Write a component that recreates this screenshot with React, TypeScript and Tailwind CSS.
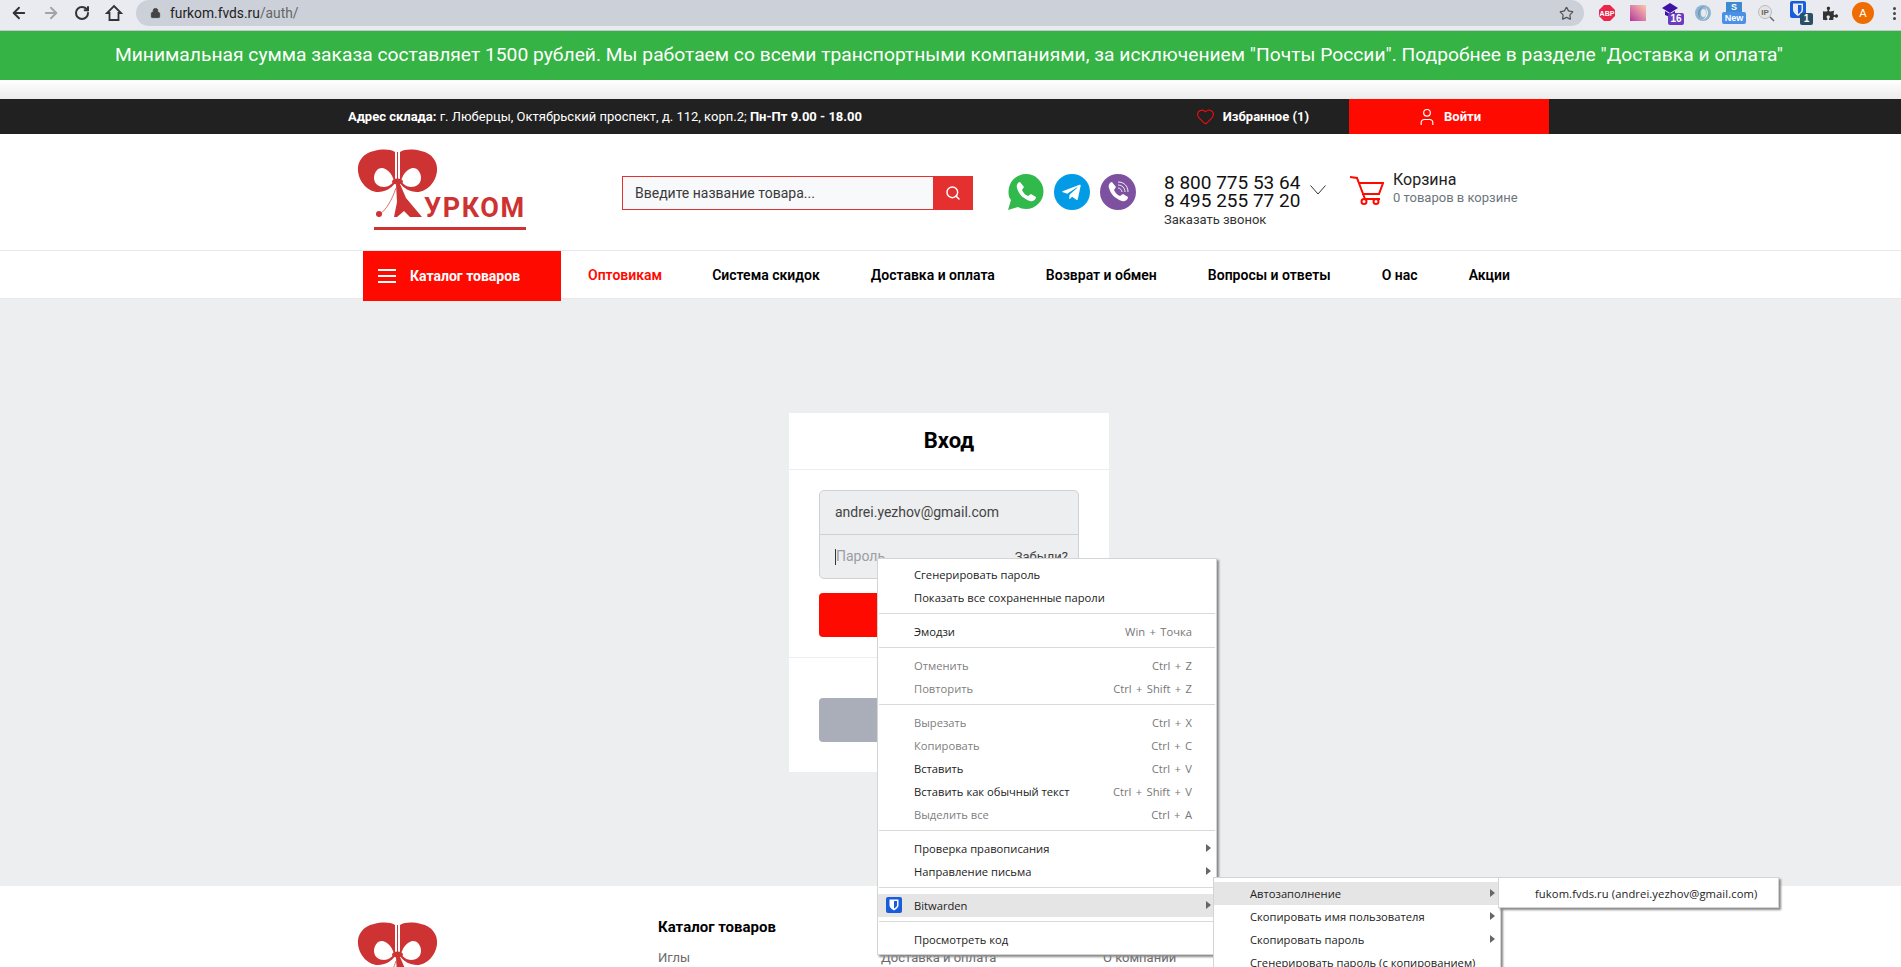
import { FaTelegramPlane, FaPuzzlePiece } from "react-icons/fa";
import { ArrowLeft, ArrowRight, RotateCw, Lock, Star, Search, Heart, User } from "lucide-react";

const navLinks = [
  { label: "Оптовикам", red: true, className: "ml-[27px]" },
  { label: "Система скидок", className: "ml-[50px]" },
  { label: "Доставка и оплата", className: "ml-[51px]" },
  { label: "Возврат и обмен", className: "ml-[51px]" },
  { label: "Вопросы и ответы", className: "ml-[51px]" },
  { label: "О нас", className: "ml-[51px]" },
  { label: "Акции", className: "ml-[51px]" },
];

const Bow = () => (
  <>
    <path d="M45 12C40 9 32 9 24 11C13 13 7 22 8 31C9 42 18 52 28 52C35 52 42 48 45 43Z" fill="#cd3333" />
    <path d="M50 12C55 9 63 9 71 11C82 13 88 22 87 31C86 42 77 52 67 52C60 52 53 48 50 43Z" fill="#cd3333" />
    <path d="M44 41C42 33 36 28 32 28C27 28 24 33 24 38C24 44 29 47 34 47C38 47 42 44 44 41Z" fill="#fff" />
    <path d="M51 41C53 33 59 28 63 28C68 28 71 33 71 38C71 44 66 47 61 47C57 47 53 44 51 41Z" fill="#fff" />
    <path d="M47.5 12V42" stroke="#cd3333" strokeWidth="1" />
    <ellipse cx="47.5" cy="41.5" rx="5.5" ry="3" fill="#cd3333" />
  </>
);

const Logo = () => (
  <svg width="190" height="100" viewBox="0 0 190 100" className="shrink-0">
    <Bow />
    <path d="M46 44H50L56 58L72 77H60L54 71L47 77H44L47 62Z" fill="#cd3333" />
    <path d="M46 48C42 60 36 70 30 74" stroke="#cd3333" strokeWidth="0.7" fill="none" />
    <circle cx="29" cy="74" r="3" fill="#cd3333" />
    <text x="74" y="77" fontFamily="Roboto" fontWeight="700" fontSize="27" letterSpacing="1.6" fill="#cd3333">
      УРКОМ
    </text>
    <rect x="24" y="87" width="152" height="3" fill="#cd3333" />
  </svg>
);

const ExtensionIcons = () => (
  <div className="flex items-center h-full">
    <svg width="16" height="16" viewBox="0 0 16 16" className="ml-[15px]">
      <path d="M5 0H11L16 5V11L11 16H5L0 11V5Z" fill="#e8274b" />
      <text x="8" y="10.5" textAnchor="middle" fontFamily="Liberation Sans" fontWeight="700" fontSize="7" fill="#fff">ABP</text>
    </svg>
    <div className="ml-[15px] w-[16px] h-[16px] bg-gradient-to-tr from-[#b5309a] to-[#fdc8a8]" />
    <div className="ml-[16px] relative w-[22px] h-[24px]">
      <svg width="16" height="14" viewBox="0 0 16 14" className="absolute top-[2px] left-0">
        <path d="M8 0L16 5L8 10L0 5Z M3 8L8 11L13 8V12L8 14L3 12Z" fill="#3f12a5" />
      </svg>
      <span className="absolute right-0 bottom-0 w-[16px] h-[12px] rounded-[2px] bg-[#6a3bc0] text-white text-[10px] leading-[12px] font-bold text-center font-['Liberation_Sans']">16</span>
    </div>
    <svg width="16" height="16" viewBox="0 0 16 16" className="ml-[11px]">
      <circle cx="8" cy="8" r="8" fill="#8fb4cf" />
      <path d="M10 1C4 3 3 10 6 14C1 10 3 2 10 1Z" fill="#5f8fb5" />
      <path d="M7 15C12 13 13 6 10 2C15 6 13 14 7 15Z" fill="#fff" />
      <ellipse cx="8.5" cy="8" rx="2.5" ry="4" fill="#e8eaed" />
    </svg>
    <div className="ml-[11px] w-[24px] flex flex-col items-center">
      <span className="w-[16px] h-[10px] bg-[#3e89d0] text-white text-[9px] leading-[10px] font-bold text-center font-['Liberation_Sans']">S</span>
      <span className="w-[24px] h-[12px] rounded-[2px] bg-[#4a8fe8] text-white text-[9px] leading-[12px] font-bold text-center font-['Liberation_Sans']">New</span>
    </div>
    <svg width="17" height="17" viewBox="0 0 17 17" className="ml-[12px]">
      <circle cx="7" cy="7" r="6.5" fill="#e4e4e4" stroke="#bbb" />
      <text x="7" y="10" textAnchor="middle" fontFamily="Liberation Sans" fontWeight="700" fontSize="8" fill="#666">IP</text>
      <path d="M12 12L16 16" stroke="#666" strokeWidth="1.5" />
    </svg>
    <div className="ml-[15px] relative w-[23px] h-[24px]">
      <svg width="16" height="18" viewBox="0 0 16 18" className="absolute left-0 top-0">
        <rect width="16" height="17" rx="2" fill="#175ddc" />
        <path d="M3 2.5H13V9C13 12 8 15 8 15C8 15 3 12 3 9Z" fill="#e9ebf0" />
        <path d="M8 4H11.5V9C11.5 11 8 13 8 13Z" fill="#175ddc" />
      </svg>
      <span className="absolute right-0 bottom-0 w-[13px] h-[12px] rounded-[2px] bg-[#2b4f66] text-white text-[10px] leading-[12px] font-bold text-center font-['Liberation_Sans']">1</span>
    </div>
    <FaPuzzlePiece className="ml-[10px] w-[15px] h-[15px] text-[#333]" />
    <div className="ml-[14px] w-[22px] h-[22px] rounded-full bg-[#ef6c00] text-white text-[11px] flex items-center justify-center font-['Liberation_Sans']">A</div>
    <div className="ml-[19px] flex flex-col gap-[2px]">
      <span className="w-[3px] h-[3px] rounded-full bg-[#444]" />
      <span className="w-[3px] h-[3px] rounded-full bg-[#444]" />
      <span className="w-[3px] h-[3px] rounded-full bg-[#444]" />
    </div>
  </div>
);

const BrowserBar = () => (
  <div className="h-[31px] bg-[#e9ebf0] border-b border-[#c4c6cb] flex items-start text-[#3c4043]">
    <ArrowLeft className="ml-[10px] mt-[4px] w-[18px] h-[18px] text-[#333]" strokeWidth={2.5} />
    <ArrowRight className="ml-[14px] mt-[4px] w-[18px] h-[18px] text-[#a0a3a8]" strokeWidth={2.5} />
    <RotateCw className="ml-[14px] mt-[5px] w-[16px] h-[16px] text-[#333]" strokeWidth={3} />
    <svg width="18" height="18" viewBox="0 0 18 18" className="ml-[15px] mt-[4px]" fill="none" stroke="#333" strokeWidth="1.8">
      <path d="M9 2L16 9H13.5V16H4.5V9H2Z" strokeLinejoin="miter" />
    </svg>
    <div className="ml-[13px] w-[1448px] h-[26px] rounded-[14px] bg-[#ccd0d9] flex items-center font-['Roboto',sans-serif] text-[13.8px]">
      <Lock className="ml-[14px] w-[11px] h-[12px] text-[#444] fill-[#444]" />
      <span className="ml-[9px] text-[#222]">furkom.fvds.ru</span>
      <span className="text-[#666]">/auth/</span>
      <Star className="ml-auto mr-[10px] w-[15px] h-[15px] text-[#555]" strokeWidth={2} />
    </div>
    <div className="h-[26px]">
      <ExtensionIcons />
    </div>
  </div>
);

const TopBar = () => (
  <div className="h-[35px] bg-[#212121] flex items-center text-white text-[13px]">
    <div className="ml-[348px]">
      <b className="font-bold">Адрес склада:</b> г. Люберцы, Октябрьский проспект, д. 112, корп.2; <b className="font-bold">Пн-Пт 9.00 - 18.00</b>
    </div>
    <Heart className="ml-auto w-[19px] h-[19px] text-[#ff0a0a]" strokeWidth={1.3} />
    <span className="ml-[8px] font-bold">Избранное (1)</span>
    <button className="ml-[40px] mr-[352px] w-[200px] h-full bg-[#ff0a00] flex items-center justify-center gap-[7px] font-bold">
      <User className="w-[20px] h-[20px]" strokeWidth={1.4} />
      Войти
    </button>
  </div>
);

const Header = () => (
  <div className="h-[117px] bg-white border-b border-[#e8e8e8] flex items-start pl-[350px]">
    <div className="mt-[6px]">
      <Logo />
    </div>
    <div className="ml-[82px] mt-[42px] w-[351px] h-[34px] flex border border-[#e53030] bg-[#f8f9fb]">
      <span className="flex-1 pl-[12px] leading-[32px] text-[14px] text-[#3a3a3a]">Введите название товара...</span>
      <span className="w-[39px] bg-[#e53030] flex items-center justify-center">
        <Search className="w-[16px] h-[16px] text-white" strokeWidth={2.2} />
      </span>
    </div>
    {/* мессенджеры */}
    <div className="ml-[35px] mt-[40px] flex gap-[10px]">
      <svg width="36" height="36" viewBox="0 0 36 36">
        <path d="M18 0A17.5 17.5 0 0 1 18 35C15 35 12 34 10 33L0 36L3 26C1 24 0.5 21 0.5 18A17.5 17.5 0 0 1 18 0Z" fill="#32b94b" />
        <path d="M12 8C10 8 8 11 9 14C11 21 16 25 22 27C26 28 28 25 28 23L23 20L20 22C17 21 15 18 14 16L16 13Z" fill="#fff" />
      </svg>
      <div className="w-[36px] h-[36px] rounded-full bg-[#039be5] flex items-center justify-center">
        <FaTelegramPlane className="w-[21px] h-[21px] text-white -ml-[2px]" />
      </div>
      <svg width="36" height="36" viewBox="0 0 36 36">
        <circle cx="18" cy="18" r="18" fill="#7d51a0" />
        <path d="M12 8C10 8 8 11 9 14C11 21 16 25 22 27C26 28 28 25 28 23L23 20L20 22C17 21 15 18 14 16L16 13Z" fill="#fff" />
        <path d="M18 8C24 8 28 12 28 18M18 11C22 11 25 14 25 18M18 14C20 14 22 16 22 18" stroke="#fff" strokeWidth="0.9" fill="none" />
      </svg>
    </div>
    <div className="ml-[28px] mt-[40px] w-[137px] flex flex-col">
      <span className="text-[19px] leading-[18px] text-[#111] whitespace-nowrap">8 800 775 53 64</span>
      <span className="text-[19px] leading-[18px] text-[#111] whitespace-nowrap">8 495 255 77 20</span>
      <span className="text-[13px] leading-[14px] mt-[3px] text-[#333]">Заказать звонок</span>
    </div>
    <svg width="16" height="10" viewBox="0 0 16 10" className="ml-[9px] mt-[51px] shrink-0" fill="none" stroke="#333" strokeWidth="1">
      <path d="M0.5 0.5L8 9L15.5 0.5" />
    </svg>
    {/* корзина */}
    <svg width="34" height="30" viewBox="0 0 34 30" className="ml-[24px] mt-[41px] shrink-0" fill="none" stroke="#ff0a00" strokeWidth="2">
      <path d="M0 2L7 3L15 24H30M9 8H33L29 19H12" />
      <circle cx="14" cy="26.5" r="2.5" />
      <circle cx="26" cy="26.5" r="2.5" />
    </svg>
    <div className="ml-[9px] mt-[37px] flex flex-col">
      <span className="text-[16px] leading-[18px] text-[#222]">Корзина</span>
      <span className="text-[13px] leading-[16px] mt-[1px] text-[#6c757d]">0 товаров в корзине</span>
    </div>
  </div>
);

const NavBar = () => (
  <div className="h-[48px] bg-white border-b border-[#e8e8e8] flex items-start pl-[363px] text-[14px] font-medium text-black relative z-10">
    <button className="w-[198px] h-[50px] bg-[#ff0a00] text-white flex items-center pl-[15px] font-bold shrink-0">
      <span className="w-[18px] flex flex-col gap-[4px] mr-[14px]">
        <span className="h-[2px] bg-white" />
        <span className="h-[2px] bg-white" />
        <span className="h-[2px] bg-white" />
      </span>
      Каталог товаров
    </button>
    {navLinks.map((link) => (
      <a key={link.label} className={`${link.className} h-[47px] leading-[48px] font-semibold whitespace-nowrap ${link.red ? "text-[#ff0a00]" : ""}`}>
        {link.label}
      </a>
    ))}
  </div>
);

const LoginCard = () => (
  <div className="w-[320px] h-[359px] bg-white">
    <div className="h-[57px] pb-[2px] border-b border-[#ecedef] flex items-center justify-center text-[22px] font-bold text-black">Вход</div>
    <div className="px-[30px] pt-[20px]">
      <div className="rounded-[5px] border border-[#cfd1d4] bg-[#eceef0] text-[14px]">
        <div className="h-[44px] border-b border-[#cfd1d4] flex items-center pl-[15px] text-[#444]">andrei.yezhov@gmail.com</div>
        <div className="h-[43px] flex items-center pl-[15px] pr-[10px]">
          <span className="w-px h-[16px] bg-[#333]" />
          <span className="text-[#9a9da3]">Пароль</span>
          <span className="ml-auto text-[13px] text-[#444]">Забыли?</span>
        </div>
      </div>
      <div className="mt-[14px] h-[44px] rounded-[4px] bg-[#ff0a00]" />
    </div>
    <div className="mt-[20px] border-t border-[#ecedef] px-[30px] pt-[40px]">
      <div className="h-[44px] rounded-[4px] bg-[#a9aeb8]" />
    </div>
  </div>
);

const Footer = () => (
  <div className="h-[81px] bg-white flex items-start pl-[350px] overflow-hidden">
    <div className="mt-[27px]">
      <Logo />
    </div>
    <div className="ml-[118px] w-[223px] mt-[33px]">
      <div className="text-[15px] leading-[16px] font-bold text-black">Каталог товаров</div>
      <div className="mt-[15px] text-[13px] leading-[16px] text-[#6b6b6b]">Иглы</div>
    </div>
    <div className="w-[222px] mt-[64px] text-[13px] leading-[16px] text-[#6b6b6b]">Доставка и оплата</div>
    <div className="mt-[64px] text-[13px] leading-[16px] text-[#6b6b6b]">О компании</div>
  </div>
);

type RowProps = {
  label: string;
  shortcut?: string;
  off?: boolean;
  arrow?: boolean;
  active?: boolean;
  icon?: boolean;
  wide?: boolean;
};

const MenuRow = ({ label, shortcut, off, arrow, active, icon, wide }: RowProps) => (
  <div className={`relative h-[23px] pt-[1px] flex items-center pl-[36px] pr-[24px] ${active ? "bg-[#e5e5e5]" : ""} ${off ? "text-[#808080]" : "text-[#222]"}`}>
    {icon && (
      <svg width="16" height="16" viewBox="0 0 16 16" className="absolute left-[8px] top-[3px]">
        <rect width="16" height="16" rx="2" fill="#175ddc" />
        <path d="M3.5 2.5H12.5V8.5C12.5 11 8 13.5 8 13.5C8 13.5 3.5 11 3.5 8.5Z" fill="#fff" />
        <path d="M8 4H11V8.3C11 9.8 8 11.6 8 11.6Z" fill="#175ddc" />
      </svg>
    )}
    <span className={`whitespace-nowrap ${wide ? "tracking-[0.1px]" : ""}`}>{label}</span>
    {shortcut && <span className="ml-auto text-[#777] whitespace-nowrap [word-spacing:1.5px]">{shortcut}</span>}
    {arrow && <span className="absolute right-[5px] top-[7px] border-y-[4px] border-y-transparent border-l-[5px] border-l-[#666]" />}
  </div>
);

const MenuSep = () => (
  <div className="h-[11px] pt-[4px] px-[1px]">
    <div className="h-px w-full bg-[#d9d9d9]" />
  </div>
);

const ContextMenus = () => (
  <div className="font-['Open_Sans',sans-serif] text-[11.2px]">
    <div className="absolute left-[877px] top-[558px] w-[340px] h-[397px] bg-white border border-[#d4d4d4] shadow-[2px_2px_2px_#8a8a8a] pt-[4px]">
      <MenuRow label="Сгенерировать пароль" />
      <MenuRow label="Показать все сохраненные пароли" />
      <MenuSep />
      <MenuRow label="Эмодзи" shortcut="Win + Точка" />
      <MenuSep />
      <MenuRow label="Отменить" shortcut="Ctrl + Z" off />
      <MenuRow label="Повторить" shortcut="Ctrl + Shift + Z" off />
      <MenuSep />
      <MenuRow label="Вырезать" shortcut="Ctrl + X" off />
      <MenuRow label="Копировать" shortcut="Ctrl + C" off />
      <MenuRow label="Вставить" shortcut="Ctrl + V" />
      <MenuRow label="Вставить как обычный текст" shortcut="Ctrl + Shift + V" />
      <MenuRow label="Выделить все" shortcut="Ctrl + A" off />
      <MenuSep />
      <MenuRow label="Проверка правописания" arrow />
      <MenuRow label="Направление письма" arrow />
      <MenuSep />
      <MenuRow label="Bitwarden" arrow active icon />
      <MenuSep />
      <MenuRow label="Просмотреть код" />
    </div>
    <div className="absolute left-[1213px] top-[877px] w-[288px] h-[100px] bg-white border border-[#d4d4d4] shadow-[2px_2px_2px_#8a8a8a] pt-[4px]">
      <MenuRow label="Автозаполнение" arrow active />
      <MenuRow label="Скопировать имя пользователя" arrow />
      <MenuRow label="Скопировать пароль" arrow />
      <MenuRow label="Сгенерировать пароль (с копированием)" />
    </div>
    <div className="absolute left-[1498px] top-[877px] w-[281px] h-[31px] bg-white border border-[#d4d4d4] shadow-[2px_2px_2px_#8a8a8a] pt-[4px]">
      <MenuRow label="fukom.fvds.ru (andrei.yezhov@gmail.com)" wide />
    </div>
  </div>
);

export default function App() {
  return (
    <div className="relative h-[967px] overflow-hidden bg-white font-['Roboto',sans-serif]">
      <BrowserBar />
      <div className="h-[49px] pr-[3px] bg-[#35b344] flex items-center justify-center text-white text-[19.25px]">
        Минимальная сумма заказа составляет 1500 рублей. Мы работаем со всеми транспортными компаниями, за исключением "Почты России". Подробнее в разделе "Доставка и оплата"
      </div>
      <div className="h-[19px] bg-gradient-to-b from-white to-[#ececec]" />
      <TopBar />
      <Header />
      <NavBar />
      <div className="h-[587px] bg-[#edeef0] pt-[114px] pl-[789px]">
        <LoginCard />
      </div>
      <Footer />
      <ContextMenus />
    </div>
  );
}
